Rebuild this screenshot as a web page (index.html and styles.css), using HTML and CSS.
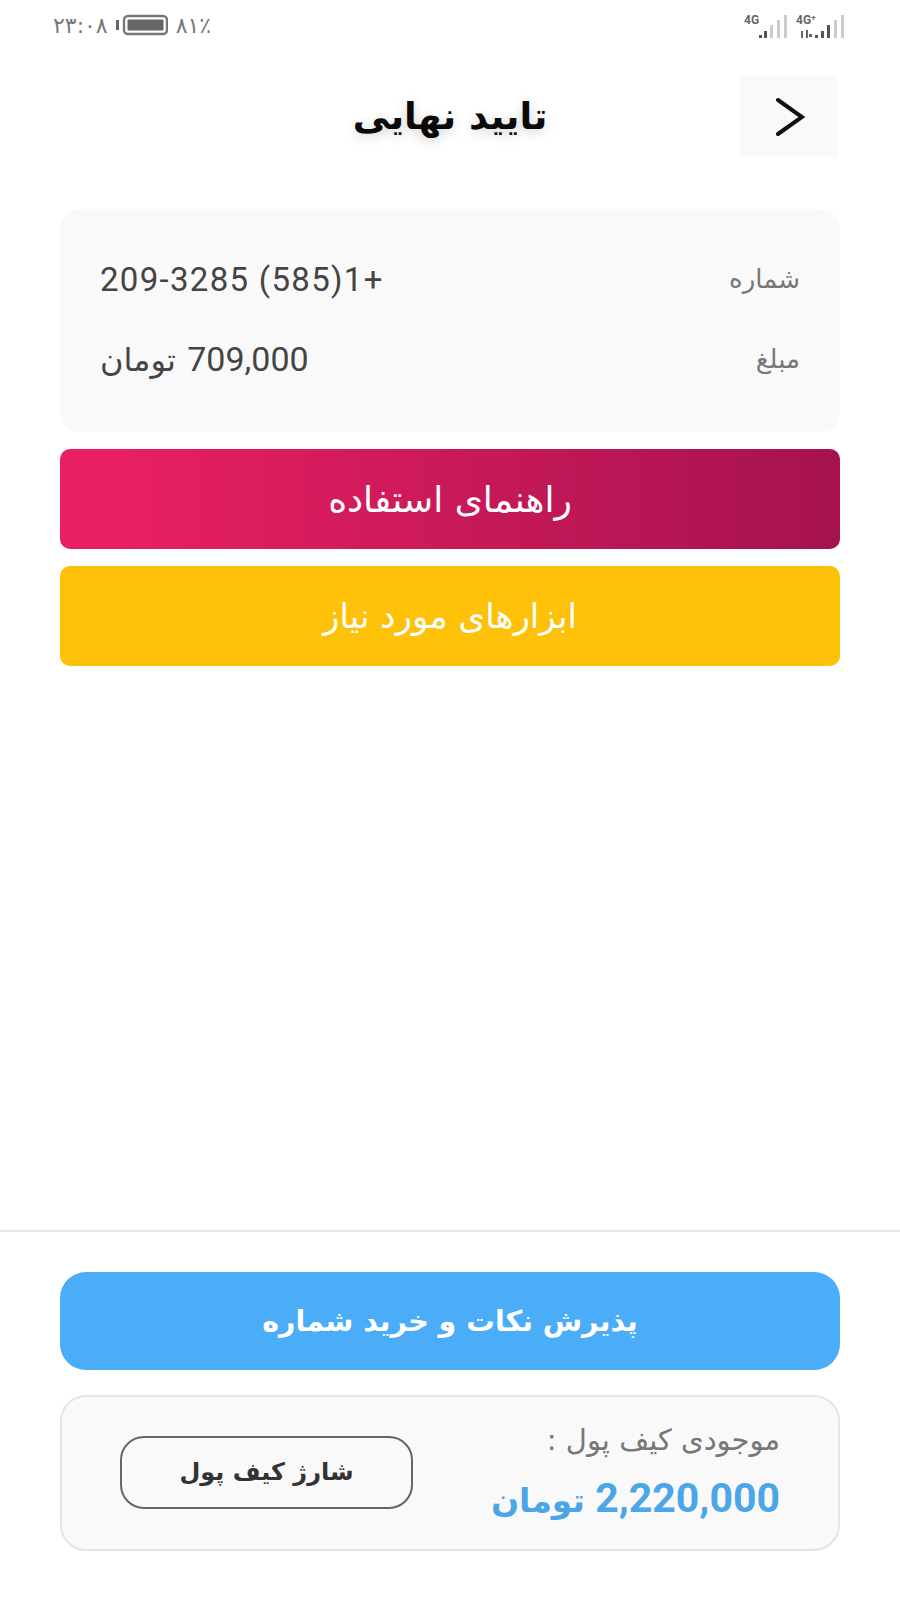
FILE: index.html
```html
<!DOCTYPE html>
<html lang="fa" dir="rtl">
<head>
<meta charset="utf-8">
<title>تایید نهایی</title>
<link rel="stylesheet" href="styles.css">
</head>
<body>
<div class="page">
  <div class="status" dir="ltr">
    <div class="status-left">
      <span class="st-text">۲۳:۰۸</span>
      <svg class="battery" width="52" height="24" viewBox="0 0 52 24">
        <rect x="0" y="7" width="3" height="10" fill="#666"/>
        <rect x="8" y="3" width="43" height="18" rx="4" fill="none" stroke="#777" stroke-width="2.4"/>
        <rect x="11.5" y="6.5" width="36" height="11" rx="1" fill="#666"/>
      </svg>
      <span class="st-text">۸۱٪</span>
    </div>
    <div class="status-right">
      <svg width="46" height="26" viewBox="0 0 46 26">
        <text x="0" y="11" class="sig-text">4G</text>
        <rect x="15" y="22" width="3" height="3" fill="#555"/><rect x="20" y="18" width="3" height="7" fill="#555"/>
        <rect x="26" y="12" width="3" height="13" fill="#ccc"/><rect x="33" y="7" width="3" height="18" fill="#ccc"/><rect x="40" y="2" width="3" height="23" fill="#ccc"/>
      </svg>
      <svg width="50" height="26" viewBox="0 0 50 26">
        <text x="0" y="11" class="sig-text">4G⁺</text>
        <rect x="5" y="18" width="2" height="7" fill="#666"/><rect x="10" y="17" width="2" height="8" fill="#666"/><rect x="13" y="21" width="3" height="3" fill="#666"/>
        <rect x="19" y="22" width="3" height="3" fill="#555"/><rect x="25" y="18" width="3" height="7" fill="#555"/>
        <rect x="31" y="12" width="3" height="13" fill="#555"/><rect x="38" y="7" width="3" height="18" fill="#ccc"/><rect x="45" y="2" width="3" height="23" fill="#ccc"/>
      </svg>
    </div>
  </div>

  <header class="header">
    <button class="back" aria-label="بازگشت">
      <svg width="32" height="42" viewBox="0 0 32 42"><path d="M5 4 L29 21 L5 38" fill="none" stroke="#111" stroke-width="4" stroke-linecap="round" stroke-linejoin="miter"/></svg>
    </button>
    <h1 class="title">تایید نهایی</h1>
  </header>

  <main class="content">
    <section class="info">
      <div class="info-row"><span class="label">شماره</span><span class="val">+1(585) 209-3285</span></div>
      <div class="info-row"><span class="label">مبلغ</span><span class="val val-amount">709,000 <span class="val-unit">تومان</span></span></div>
    </section>
    <a class="bar bar-pink">راهنمای استفاده</a>
    <a class="bar bar-yellow">ابزارهای مورد نیاز</a>
  </main>

  <footer class="footer">
    <button class="accept">پذیرش نکات و خرید شماره</button>
    <section class="wallet">
      <div class="wallet-info">
        <div class="wallet-label">موجودی کیف پول :</div>
        <div class="wallet-value">2,220,000 <span class="wallet-unit">تومان</span></div>
      </div>
      <button class="charge">شارژ کیف پول</button>
    </section>
  </footer>
</div>
</body>
</html>
```
FILE: styles.css
```css
* { box-sizing: border-box; }
html, body { margin: 0; background: #fff; }
body { font-family: Roboto, "DejaVu Sans", sans-serif; color: #444; }
.page { width: 900px; height: 1600px; display: flex; flex-direction: column; overflow: hidden; }

.status { height: 50px; padding: 11px 54px 0 53px; display: flex; justify-content: space-between; align-items: flex-start; }
.status-left { display: flex; align-items: center; gap: 8px; height: 28px; }
.st-text { font-size: 22px; color: #777; font-family: "DejaVu Sans", sans-serif; letter-spacing: 1.2px; }
.status-right { display: flex; gap: 6px; margin-top: 2px; }
.sig-text { font: bold 12px Roboto, sans-serif; fill: #666; }

.header { margin-top: 26px; height: 81px; padding: 0 62px 0 60px; display: flex; align-items: center; position: relative; }
.back { width: 98px; height: 81px; background: #f9f9f9; border: 0; border-radius: 3px; display: flex; align-items: center; justify-content: center; padding: 0; }
.title { position: absolute; left: 0; right: 0; margin: 0; text-align: center; font: bold 37px "DejaVu Sans", sans-serif; color: #0a0a0a; text-shadow: 0 3px 12px rgba(0,0,0,.18); pointer-events: none; }

.content { margin-top: 52px; padding: 0 60px; display: flex; flex-direction: column; flex: 1; }
.info { height: 223px; background: #f9f9f9; border-radius: 20px; padding: 50px 40px 0; display: flex; flex-direction: column; gap: 40px; }
.info-row { display: flex; justify-content: space-between; align-items: center; height: 40px; }
.label { font: 26px "DejaVu Sans", sans-serif; color: #777; }
.val { font-size: 33px; color: #444; font-family: Roboto, "DejaVu Sans", sans-serif; letter-spacing: 1.3px; }
.val-amount { font-size: 34px; word-spacing: 3px; }
.val-unit { font-size: 32px; letter-spacing: 0; }

.bar { display: flex; align-items: center; justify-content: center; height: 100px; border-radius: 10px; color: #fff; font: 34px "DejaVu Sans", sans-serif; }
.bar-pink { margin-top: 17px; font-size: 36px; background: linear-gradient(to right, #e91f63 7%, #a5124f); }
.bar-yellow { margin-top: 17px; background: #fdc107; }

.footer { height: 370px; border-top: 2px solid #e6e6e6; padding: 40px 60px 0; display: flex; flex-direction: column; }
.accept { height: 98px; border: 0; border-radius: 26px; background: #4bacf8; color: #fff; font: bold 28.5px "DejaVu Sans", sans-serif; }
.wallet { margin-top: 25px; height: 156px; border: 2px solid #e4e4e4; border-radius: 26px; background: #f9f9f9; padding: 0 58px; display: flex; justify-content: space-between; align-items: center; }
.wallet-info { display: flex; flex-direction: column; gap: 17px; margin-top: -2px; }
.wallet-label { font: 29px "DejaVu Sans", sans-serif; color: #777; }
.wallet-value { font: bold 41px Roboto, "DejaVu Sans", sans-serif; color: #4aa6e6; }
.wallet-unit { font-size: 33px; }
.charge { width: 293px; height: 73px; border: 2px solid #666; border-radius: 24px; background: #f9f9f9; color: #333; font: bold 24px "DejaVu Sans", sans-serif; margin-top: -2px; }
```
